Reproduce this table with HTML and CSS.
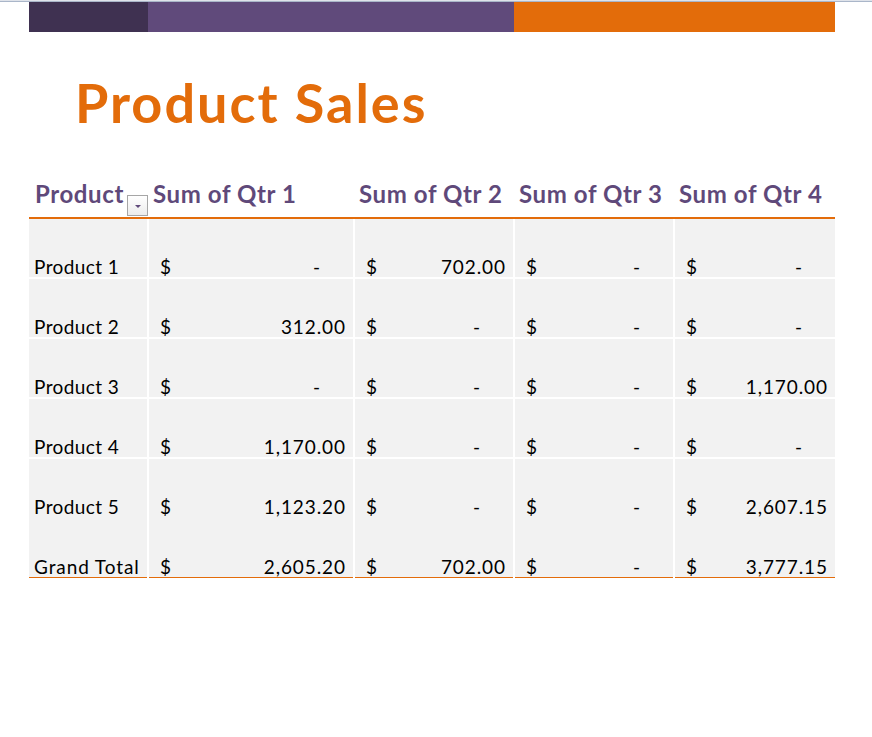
FILE: index.html
```html
<!DOCTYPE html>
<html lang="en">
<head>
<meta charset="utf-8">
<title>Product Sales</title>
<link rel="stylesheet" href="styles.css">
</head>
<body>
<div class="gridline"></div>
<div class="sheet">
  <div class="bar">
    <div class="seg seg-dark"></div>
    <div class="seg seg-purple"></div>
    <div class="seg seg-orange"></div>
  </div>
  <h1 class="title">Product Sales</h1>
  <div class="table">
    <div class="row head">
      <div class="cell hcell first">Product
        <span class="filter"><span class="tri"></span></span>
      </div>
      <div class="cell hcell">Sum of Qtr 1</div>
      <div class="cell hcell">Sum of Qtr 2</div>
      <div class="cell hcell">Sum of Qtr 3</div>
      <div class="cell hcell">Sum of Qtr 4</div>
    </div>
    <div class="row body">
      <div class="cell label">Product 1</div>
      <div class="cell money"><span>$</span><span class="dash">-</span></div>
      <div class="cell money"><span>$</span><span class="num">702.00</span></div>
      <div class="cell money"><span>$</span><span class="dash">-</span></div>
      <div class="cell money"><span>$</span><span class="dash">-</span></div>
    </div>
    <div class="row body">
      <div class="cell label">Product 2</div>
      <div class="cell money"><span>$</span><span class="num">312.00</span></div>
      <div class="cell money"><span>$</span><span class="dash">-</span></div>
      <div class="cell money"><span>$</span><span class="dash">-</span></div>
      <div class="cell money"><span>$</span><span class="dash">-</span></div>
    </div>
    <div class="row body">
      <div class="cell label">Product 3</div>
      <div class="cell money"><span>$</span><span class="dash">-</span></div>
      <div class="cell money"><span>$</span><span class="dash">-</span></div>
      <div class="cell money"><span>$</span><span class="dash">-</span></div>
      <div class="cell money"><span>$</span><span class="num">1,170.00</span></div>
    </div>
    <div class="row body">
      <div class="cell label">Product 4</div>
      <div class="cell money"><span>$</span><span class="num">1,170.00</span></div>
      <div class="cell money"><span>$</span><span class="dash">-</span></div>
      <div class="cell money"><span>$</span><span class="dash">-</span></div>
      <div class="cell money"><span>$</span><span class="dash">-</span></div>
    </div>
    <div class="row body">
      <div class="cell label">Product 5</div>
      <div class="cell money"><span>$</span><span class="num">1,123.20</span></div>
      <div class="cell money"><span>$</span><span class="dash">-</span></div>
      <div class="cell money"><span>$</span><span class="dash">-</span></div>
      <div class="cell money"><span>$</span><span class="num">2,607.15</span></div>
    </div>
    <div class="row body total">
      <div class="cell label">Grand Total</div>
      <div class="cell money"><span>$</span><span class="num">2,605.20</span></div>
      <div class="cell money"><span>$</span><span class="num">702.00</span></div>
      <div class="cell money"><span>$</span><span class="dash">-</span></div>
      <div class="cell money"><span>$</span><span class="num">3,777.15</span></div>
    </div>
  </div>
</div>
</body>
</html>
```

FILE: styles.css
```css
html, body {
  margin: 0;
  padding: 0;
  background: #ffffff;
}
body {
  font-family: Lato, "Liberation Sans", sans-serif;
  color: #000;
}
.gridline {
  height: 1px;
  background: #dfe3ea;
  border-bottom: 1px solid #aab6c9;
}
.sheet {
  margin-left: 29px;
  width: 806px;
}
.bar {
  display: flex;
  height: 30px;
}
.seg-dark { width: 119px; background: #3f3151; }
.seg-purple { width: 366px; background: #604a7b; }
.seg-orange { flex: 1; background: #e36c0a; }

.title {
  margin: 41px 0 0 46px;
  font-size: 54px;
  line-height: 60px;
  font-weight: 700;
  color: #e36c0a;
  letter-spacing: 2px;
}
.row {
  display: grid;
  grid-template-columns: 118px 204px 158px 158px 160px;
  column-gap: 2px;
}
.head {
  height: 84px;
  border-bottom: 2px solid #e36c0a;
  align-items: end;
}
.hcell {
  font-size: 24px;
  line-height: 30px;
  font-weight: 700;
  color: #5f497a;
  padding: 0 0 8px 4px;
  letter-spacing: 0.6px;
  white-space: nowrap;
}
.hcell.first {
  position: relative;
  padding-left: 6px;
}
.filter {
  position: absolute;
  right: -1px;
  bottom: 1px;
  width: 21px;
  height: 21px;
  box-sizing: border-box;
  border: 1px solid #a6a6a6;
  background: linear-gradient(#ffffff, #ececec);
  display: flex;
  align-items: center;
  justify-content: center;
}
.tri {
  width: 0;
  height: 0;
  border-left: 3px solid transparent;
  border-right: 3px solid transparent;
  border-top: 3px solid #5f497a;
  margin-top: 2px;
}
.body {
  height: 58px;
  margin-top: 2px;
}
.head + .body {
  margin-top: 0;
}
.body .cell {
  background: #f2f2f2;
  box-sizing: border-box;
  display: flex;
  align-items: flex-end;
  font-size: 19px;
  line-height: 19px;
  padding-bottom: 1px;
}
.label {
  padding-left: 5px;
  white-space: nowrap;
  letter-spacing: 0.4px;
}
.money {
  justify-content: space-between;
  padding-left: 11px;
  padding-right: 8px;
}
.num {
  letter-spacing: 0.9px;
  margin-right: -0.9px;
}
.dash {
  padding-right: 25px;
}
.total {
  margin-top: 0;
  height: 61px;
}
.total .cell {
  border-bottom: 1px solid #e36c0a;
}
.total .label {
  letter-spacing: 0.9px;
}
```
